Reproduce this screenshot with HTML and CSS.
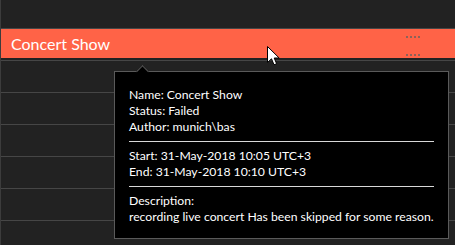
FILE: index.html
```html
<!DOCTYPE html>
<html lang="en">
<head>
  <meta charset="UTF-8" />
  <title>Timeline</title>
  <link rel="stylesheet" href="styles.css">
</head>
<body>
  <div class="grid">
    <div class="row row-top"></div>
    <div class="row">
      <div class="bar">
        <span class="bar-title">Concert Show</span>
        <span class="grip grip-top"><i></i><i></i><i></i><i></i></span>
        <span class="grip grip-bottom"><i></i><i></i><i></i><i></i></span>
      </div>
    </div>
    <div class="row"></div>
    <div class="row"></div>
    <div class="row"></div>
    <div class="row"></div>
    <div class="row"></div>
    <div class="row"></div>

    <div class="tooltip">
      <div class="line">Name: Concert Show</div>
      <div class="line">Status: Failed</div>
      <div class="line">Author: munich\bas</div>
      <hr class="sep">
      <div class="line">Start: 31-May-2018 10:05 UTC+3</div>
      <div class="line">End: 31-May-2018 10:10 UTC+3</div>
      <hr class="sep">
      <div class="line">Description:</div>
      <div class="line">recording live concert Has been skipped for some reason.</div>
    </div>

    <svg class="cursor" width="13" height="20" viewBox="0 0 13 20">
      <path d="M0.5 0.5 V16.5 L4.5 12.8 L7 18.8 L9.6 17.7 L7.2 12 H12.2 Z" fill="#fff" stroke="#000" stroke-width="1"/>
    </svg>
  </div>
</body>
</html>
```

FILE: styles.css
```css
body {
  margin: 0;
  background: #222;
  font-family: 'Segoe UI', 'Lato', sans-serif;
  overflow: hidden;
}

.grid {
  position: relative;
  height: 245px;
  border-left: 1px solid #3c3c3c;
  background: #222;
}

.row {
  height: 31px;
  border-top: 1px solid #464646;
}

.row-top {
  height: 28px;
  border-top: none;
}

.bar {
  position: relative;
  height: 29px;
  background: #ff6347;
  display: flex;
  align-items: center;
  padding-left: 10px;
}

.bar-title {
  color: #fff;
  font-size: 16px;
}

.grip {
  position: absolute;
  left: 405px;
  display: flex;
  gap: 2px;
}

.grip i {
  width: 2px;
  height: 2px;
  background: #8c6259;
}

.grip-top {
  top: 7px;
}

.grip-bottom {
  top: 25px;
}

.tooltip {
  position: absolute;
  left: 113px;
  top: 71px;
  width: 305px;
  padding: 15px 14px 13px;
  background: #000;
  border: 1px solid #5a5a5a;
  color: #fff;
  font-size: 12.2px;
}

.tooltip::before {
  content: "";
  position: absolute;
  left: 23px;
  top: -5px;
  width: 8px;
  height: 8px;
  background: #000;
  border-top: 1px solid #5a5a5a;
  border-left: 1px solid #5a5a5a;
  transform: rotate(45deg);
}

.line {
  line-height: 16px;
  white-space: nowrap;
}

.sep {
  margin: 6px 0 6px;
  border: none;
  border-top: 1px solid #d8d8d8;
  height: 0;
}

.cursor {
  position: absolute;
  left: 266px;
  top: 46px;
}
```
